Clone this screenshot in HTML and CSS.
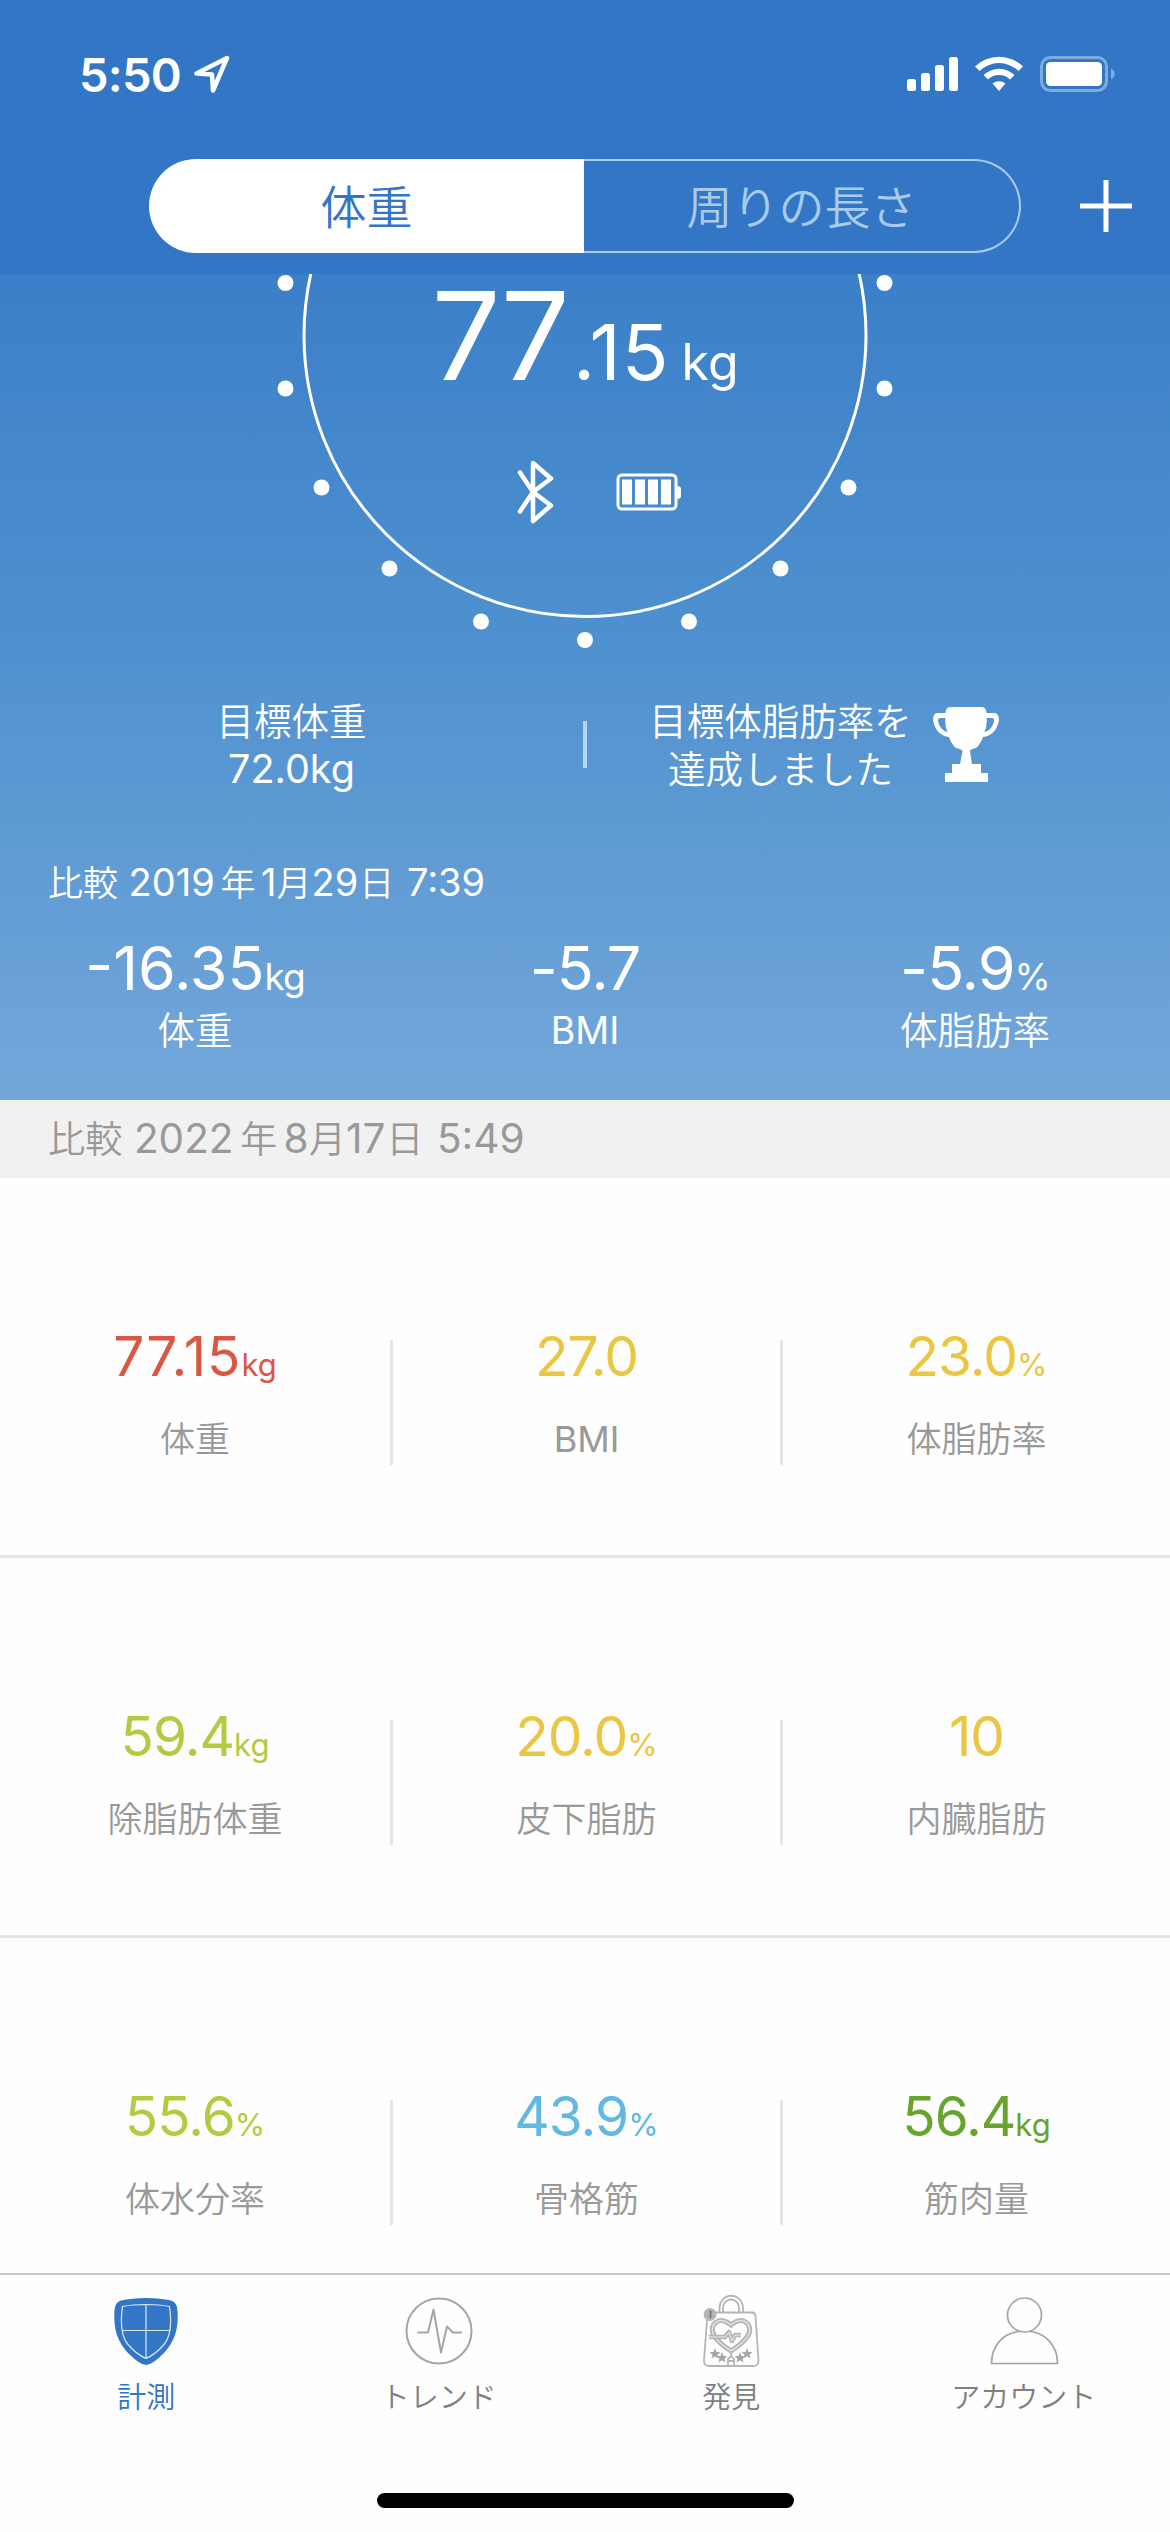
FILE: index.html
```html
<!DOCTYPE html>
<html lang="ja">
<head>
  <meta charset="UTF-8" />
  <meta name="viewport" content="width=device-width, initial-scale=1.0"/>
  <title>計測 | 体重</title>
  <link rel="stylesheet" href="styles.css">
</head>
<body>

<div class="app">
  <header class="header">
    <div class="status-bar">
      <div class="status-left">
        <span class="time">5:50</span>
        <svg class="location" width="36" height="38" viewBox="0 0 36 38"><path d="M2.5 18.5 33 3 19 35.500 18 19.500Z" /></svg>
      </div>
      <svg class="status-icons" width="210" height="38" viewBox="0 0 210 38">
        <g fill="#fff">
          <rect x="1" y="24" width="9" height="12" rx="2.5" />
          <rect x="15" y="18" width="9" height="18" rx="2.5" />
          <rect x="29" y="10" width="9" height="26" rx="2.5" />
          <rect x="43" y="2" width="9" height="34" rx="2.5" />
          <path d="M69 11.5A34.500 34.500 0 0 1 117 11.500L112.500 16A28 28 0 0 0 73.500 16Z" />
          <path d="M77.500 20A22.500 22.500 0 0 1 108.500 20L104 24.500A16 16 0 0 0 82 24.500Z" />
          <path d="M86.500 28.500A10.500 10.500 0 0 1 99.500 28.500L93 36Z" />
          <rect x="140" y="7" width="56" height="24" rx="4.500" />
        </g>
        <rect x="135.500" y="2.500" width="65" height="33" rx="9" fill="none" stroke="#7daddc" stroke-width="3" />
        <path d="M205 13.500a6 6 0 0 1 0 11z" fill="#7daddc" />
      </svg>
    </div>
    <div class="nav">
      <div class="segment">
        <button class="active">体重</button>
        <button>周りの長さ</button>
      </div>
      <svg class="plus" width="54" height="54" viewBox="0 0 54 54"><path d="M1 27H53M27 1V53" stroke="#fff" stroke-width="5" /></svg>
    </div>
  </header>

  <section class="hero">
    <div class="gauge">
      <svg class="dial" width="640" height="380" viewBox="265 274 640 380">
        <circle cx="585" cy="335.500" r="281" fill="none" stroke="#fff" stroke-width="3" />
        <g fill="#fff">
          <circle cx="285.500" cy="283" r="8" />
          <circle cx="884.500" cy="283" r="8" />
          <circle cx="285.500" cy="388.500" r="8" />
          <circle cx="884.500" cy="388.500" r="8" />
          <circle cx="321.500" cy="487.500" r="8" />
          <circle cx="848.500" cy="487.500" r="8" />
          <circle cx="389.500" cy="568.500" r="8" />
          <circle cx="780.500" cy="568.500" r="8" />
          <circle cx="481" cy="621.500" r="8" />
          <circle cx="689" cy="621.500" r="8" />
          <circle cx="585" cy="640" r="8" />
        </g>
      </svg>
      <div class="weight"><span class="int">77</span><span class="dec">.15</span><span class="unit">kg</span></div>
      <div class="devices">
        <svg width="38" height="64" viewBox="0 0 38 64"><path d="M3 12.500 16 32 34 45.500 16 61V3L34 18.500 16 32 3 51.500" /></svg>
        <svg width="66" height="38" viewBox="0 0 66 38">
          <rect x="2" y="2" width="58" height="34" rx="4" fill="none" stroke="#fff" stroke-width="3" />
          <path d="M6 6.500h10v25H6zM19 6.500h10v25H19zM32 6.500h10v25H32zM45 6.500h10v25H45zM61 13q4 0 4 3v7q0 3-4 3z" fill="#fff" />
        </svg>
      </div>
    </div>

    <div class="goals">
      <div class="goal goal-weight">目標体重<br><span>72.0kg</span></div>
      <div class="goal-line"></div>
      <div class="goal goal-fat">
        <div>目標体脂肪率を<br>達成しました</div>
        <svg width="68" height="78" viewBox="0 0 68 78">
          <path d="M18 2H50Q54 2 54.500 8H63Q67 9 67 15C65 26 59 31 51 32Q48 40 44 43Q39 44 38 46L40 59H49V68H56V77H13V68H20V59H28L30.500 46Q29 44 24 43Q20 40 17 32C9 31 3 26 1 15Q1 9 5 8H13.500Q14 2 18 2ZM13.500 13H8Q5.500 13 6 16C7 22 11 26 15.500 27Q12.500 20 13.500 13ZM54.500 13Q55.500 20 52.500 27C57 26 61 22 62 16Q62.500 13 60 13Z" fill="#fff" />
        </svg>
      </div>
    </div>

    <p class="since"><span>比較</span> 2019 <span class="year">年</span> 1<span>月</span>29<span class="day">日</span> 7:39</p>
    <div class="changes">
      <div class="change">
        <div class="num wide">-16.35<small>kg</small></div>
        <div class="name">体重</div>
      </div>
      <div class="change">
        <div class="num">-5.7</div>
        <div class="name latin">BMI</div>
      </div>
      <div class="change">
        <div class="num">-5.9<small>%</small></div>
        <div class="name">体脂肪率</div>
      </div>
    </div>
  </section>

  <div class="compare"><span>比較</span> 2022 <span class="year">年</span> 8<span>月</span>17<span class="day">日</span> 5:49</div>

  <main class="metrics">
    <div class="row">
      <div class="cell"><div class="value red wide">77.15<small>kg</small></div><div class="label">体重</div></div>
      <div class="cell"><div class="value yellow">27.0</div><div class="label latin">BMI</div></div>
      <div class="cell"><div class="value yellow">23.0<small>%</small></div><div class="label">体脂肪率</div></div>
    </div>
    <div class="row">
      <div class="cell"><div class="value lime">59.4<small>kg</small></div><div class="label">除脂肪体重</div></div>
      <div class="cell"><div class="value yellow">20.0<small>%</small></div><div class="label">皮下脂肪</div></div>
      <div class="cell"><div class="value yellow">10</div><div class="label">内臓脂肪</div></div>
    </div>
    <div class="row">
      <div class="cell"><div class="value lime">55.6<small>%</small></div><div class="label">体水分率</div></div>
      <div class="cell"><div class="value sky">43.9<small>%</small></div><div class="label">骨格筋</div></div>
      <div class="cell"><div class="value green">56.4<small>kg</small></div><div class="label">筋肉量</div></div>
    </div>
  </main>

  <nav class="tabs">
    <a class="tab active">
      <svg width="72" height="76" viewBox="0 0 72 76">
        <path d="M36 4Q51 4 61 6.500Q67 8 67.500 16C69 36 64 48 54 59Q42 71 36 71Q30 71 18 59C8 48 3 36 4.500 16Q5 8 11 6.500Q21 4 36 4Z" fill="#3276c5" />
        <path d="M36 10.500Q50 10.500 59.500 12.500C62 30 61 42 54 50.500Q46 60 36 64.500Q26 60 18 50.500C11 42 10 30 12.500 12.500Q22 10.500 36 10.500ZM36 10.500V64M13 36.500H59" fill="none" stroke="#dce9f7" stroke-width="1.200" />
      </svg>
      <span>計測</span>
    </a>
    <a class="tab">
      <svg width="72" height="76" viewBox="0 0 72 76" fill="none" stroke="#a5a5a5" stroke-width="2">
        <circle cx="36" cy="37" r="32.500" />
        <path d="M15 38.500H25L30.500 15.500 38 58.500 44 32.500 50 38.500H58" stroke-linecap="round" stroke-linejoin="round" />
      </svg>
      <span>トレンド</span>
    </a>
    <a class="tab">
      <svg width="72" height="76" viewBox="0 0 72 76" fill="none" stroke="#b5b5b5" stroke-width="1.800">
        <path d="M24.500 18.500V14A11.500 12 0 0 1 48 14V18.500M28 18.500V14A8 8.500 0 0 1 44 14V18.500M18 18.500H57Q60 18.500 60.500 22L63.500 66Q64 72 58 72H14Q8.500 72 9 66L12 26" />
        <path d="M36 57C19 46 15 37 18.500 31Q25 22 36 31Q47 22 53.500 31C57 37 53 46 36 57Z" stroke-width="5" />
        <path d="M36 57C19 46 15 37 18.500 31Q25 22 36 31Q47 22 53.500 31C57 37 53 46 36 57Z" stroke="#e4e4e4" stroke-width="1.500" />
        <path d="M14 43H30L34 38 37 47 40 41H46" stroke-width="4.500" stroke-linejoin="round" />
        <path d="M14 43H30L34 38 37 47 40 41H46" stroke="#eee" stroke-width="1" />
        <circle cx="15" cy="20.500" r="5.500" fill="#b5b5b5" />
        <path d="M15.500 16.500V24" stroke="#777" />
        <path id="star" d="m20 54 1.500 4 4 .2-3 2.500 1 3.800-3.500-2.200-3.500 2.200 1-3.800-3-2.500 4-.2z" fill="#a5a5a5" stroke="none" />
        <use href="#star" x="7" y="4" />
        <use href="#star" x="25" y="4" />
        <use href="#star" x="32" />
        <path d="M36 57V63M33 71V65L36 62 39 65V71M33 67H39" />
      </svg>
      <span>発見</span>
    </a>
    <a class="tab">
      <svg width="72" height="76" viewBox="0 0 72 76" fill="none" stroke="#a5a5a5" stroke-width="1.700">
        <circle cx="36.500" cy="21" r="17" />
        <path d="M31 37.500C16 39 3.500 51 3.500 69.500H69.500C69.500 51 57 39 42 37.500" />
      </svg>
      <span>アカウント</span>
    </a>
  </nav>
  <div class="home-indicator"></div>
</div>

</body>
</html>
```

FILE: styles.css
```css
* { box-sizing: border-box; }

body {
  margin: 0;
  font-family: Inter, "Noto Sans CJK JP", sans-serif;
  font-weight: 400;
  background: #fefefe;
}

svg { display: block; flex-shrink: 0; }

small { line-height: 0; }

.app {
  width: 1170px;
  height: 2532px;
  display: flex;
  flex-direction: column;
  overflow: hidden;
}

/* header */
.header {
  height: 274px;
  flex-shrink: 0;
  background: #3276c5;
  color: #fff;
}

.status-bar {
  height: 159px;
  padding: 55px 54px 0 79px;
  display: flex;
  justify-content: space-between;
  align-items: flex-start;
}

.status-left {
  display: flex;
  align-items: center;
  gap: 13px;
  height: 38px;
}

.time {
  font-size: 47px;
  font-weight: 600;
  letter-spacing: -0.8px;
}

.location {
  fill: none;
  stroke: #fff;
  stroke-width: 4.5;
  stroke-linejoin: round;
}

.nav {
  display: flex;
  align-items: center;
  justify-content: space-between;
  padding: 0 37px 0 149px;
}

.segment {
  display: flex;
  width: 872px;
  height: 94px;
}

.segment button {
  flex: 1;
  padding: 0 0 4px;
  border: 2px solid #a9cbea;
  border-left: 0;
  border-radius: 0 47px 47px 0;
  background: none;
  font: inherit;
  font-weight: 350;
  font-size: 46px;
  color: #a9cbea;
}

.segment .active {
  border: 0;
  border-radius: 47px 0 0 47px;
  background: #fff;
  color: #3276c5;
}

/* blue summary */
.hero {
  height: 826px;
  flex-shrink: 0;
  background: linear-gradient(#3b7fc9, #4f91cf 45%, #73a7da);
  color: #fff;
}

.gauge {
  display: grid;
  justify-content: center;
  height: 420px;
}

.gauge > * { grid-column: 1; grid-row: 1; }

.weight {
  display: flex;
  justify-content: center;
  align-items: baseline;
  height: 140px;
  line-height: 123px;
  white-space: nowrap;
}

.weight .int { font-size: 122px; letter-spacing: -2px; }
.weight .dec { font-size: 77px; letter-spacing: 1px; margin-left: 5px; }
.weight .unit { font-size: 50px; margin-left: 12px; }

.devices {
  display: flex;
  justify-content: center;
  align-items: center;
  gap: 61px;
  height: 64px;
  margin-top: 186px;
  padding-left: 28px;
}

.devices path:only-child {
  fill: none;
  stroke: #fff;
  stroke-width: 4.5;
  stroke-linecap: round;
  stroke-linejoin: round;
}

.goals {
  display: flex;
  align-items: center;
  height: 100px;
  font-size: 37.5px;
  font-weight: 350;
  line-height: 48px;
  text-align: center;
}

.goal { width: 583px; padding-top: 3px; }
.goal span { font-size: 39.5px; font-weight: 400; line-height: 1; }

.goal-line {
  width: 4px;
  height: 47px;
  background: #b9d4ee;
}

.goal-fat {
  display: flex;
  justify-content: center;
  align-items: center;
  gap: 20px;
  padding-right: 108px;
}

.goal-fat svg { margin-top: -4px; }

.since {
  margin: 58px 0 0;
  padding-left: 48px;
  font-size: 38px;
  line-height: 60px;
}

.since span, .compare span {
  font-size: 0.92em;
  font-weight: 350;
  line-height: 1;
}

.since .year, .compare .year { margin: 0 -5px; }
.since .day, .compare .day { margin: 0 2px 0 1px; }

.changes { display: grid; grid-template-columns: repeat(3, 390px); margin-top: 19px; }
.change { text-align: center; }

.num {
  font-size: 61px;
  line-height: 74px;
  letter-spacing: -1px;
}

.num.wide { letter-spacing: 0; }
.num small { font-size: 37px; letter-spacing: -1px; }

.name {
  font-size: 37.5px;
  font-weight: 350;
  line-height: 52px;
}

.compare {
  height: 78px;
  flex-shrink: 0;
  padding-left: 48px;
  background: #f1f1f1;
  color: #999;
  font-size: 40.5px;
  line-height: 78px;
}

/* metric grid */
.metrics {
  height: 1095px;
  flex-shrink: 0;
  overflow: hidden;
}

.row {
  display: grid;
  grid-template-columns: repeat(3, 390px);
  height: 380px;
  padding-top: 162px;
  border-bottom: 3px solid #e5e5e5;
}

.cell {
  height: 125px;
  text-align: center;
}

.cell + .cell { border-left: 3px solid #e5e5e5; }

.value {
  font-size: 55px;
  line-height: 32px;
  letter-spacing: -1px;
}

.value.wide { letter-spacing: 1px; }
.value small { font-size: 31px; letter-spacing: 0; }

.label {
  margin-top: 41px;
  font-size: 35px;
  font-weight: 350;
  line-height: 52px;
  color: #999;
}

.label.latin { font-size: 36px; }
.latin { font-weight: 400; }

.red { color: #d95845; }
.yellow { color: #eac643; }
.lime { color: #b1cc41; }
.sky { color: #61b9e3; }
.green { color: #68a42d; }

/* bottom tabs */
.tabs {
  display: grid;
  grid-template-columns: repeat(4, 1fr);
  height: 220px;
  flex-shrink: 0;
  border-top: 2px solid #c8c8c8;
  padding-top: 19px;
}

.tab {
  display: flex;
  flex-direction: column;
  align-items: center;
  font-size: 29px;
  font-weight: 350;
  line-height: 55px;
  color: #808080;
}

.tab.active { color: #3276c5; }

.home-indicator {
  width: 417px;
  height: 15px;
  flex-shrink: 0;
  margin: 0 auto;
  border-radius: 8px;
  background: #000;
}
```
